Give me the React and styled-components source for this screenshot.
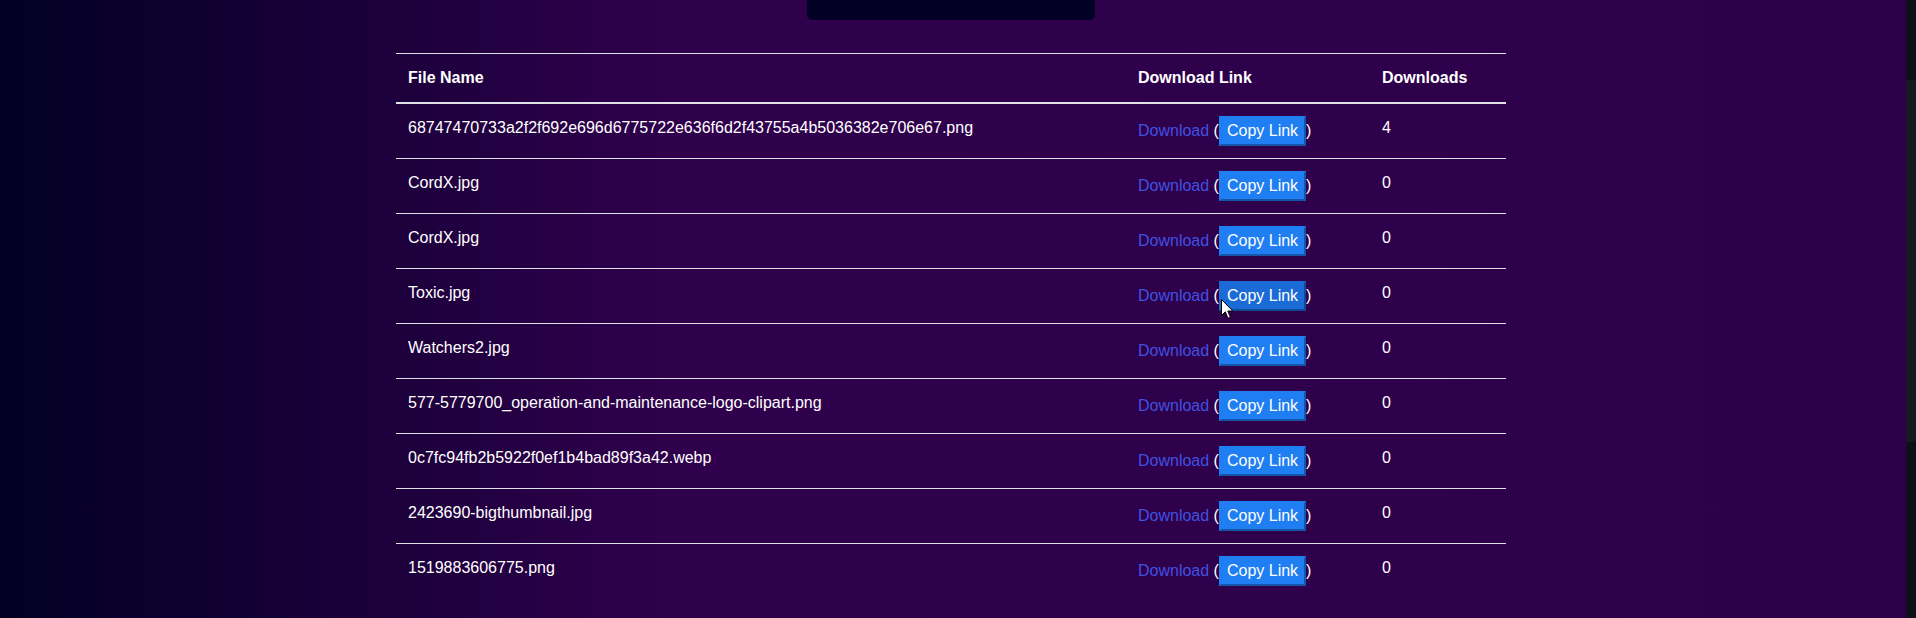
import React from "react";
import styled, { createGlobalStyle } from "styled-components";

const files = [
  { name: "68747470733a2f2f692e696d6775722e636f6d2f43755a4b5036382e706e67.png", count: 4 },
  { name: "CordX.jpg", count: 0 },
  { name: "CordX.jpg", count: 0 },
  { name: "Toxic.jpg", count: 0, hover: true },
  { name: "Watchers2.jpg", count: 0 },
  { name: "577-5779700_operation-and-maintenance-logo-clipart.png", count: 0 },
  { name: "0c7fc94fb2b5922f0ef1b4bad89f3a42.webp", count: 0 },
  { name: "2423690-bigthumbnail.jpg", count: 0 },
  { name: "1519883606775.png", count: 0 },
];

function App() {
  return (
    <>
      <GlobalStyle />
      <Page>
        <Main>
          <TopBox />
          <Container>
            <Table>
              <thead>
                <tr>
                  <Th $w={730}>File Name</Th>
                  <Th $w={244}>Download Link</Th>
                  <Th $w={136}>Downloads</Th>
                </tr>
              </thead>
              <tbody>
                {files.map((f, i) => (
                  <tr key={i}>
                    <Td>{f.name}</Td>
                    <Td>
                      <DownloadLink href="#">Download</DownloadLink> (
                      <CopyButton $hover={f.hover}>Copy Link</CopyButton>)
                    </Td>
                    <Td>{f.count}</Td>
                  </tr>
                ))}
              </tbody>
            </Table>
          </Container>
          <Cursor width="13" height="21" viewBox="0 0 13 21">
            <path
              d="M0.5 0.5 L0.5 16.5 L4.3 12.8 L7 19.3 L9.4 18.3 L6.8 12 L11.8 12 Z"
              fill="#fff"
              stroke="#000"
              strokeWidth="1"
              strokeLinejoin="miter"
            />
          </Cursor>
        </Main>
        <ScrollTrack>
          <ScrollThumb />
        </ScrollTrack>
      </Page>
    </>
  );
}

export default App;

const GlobalStyle = createGlobalStyle`
  html, body {
    margin: 0;
    padding: 0;
    overflow: hidden;
  }
  body {
    font-family: "Liberation Sans", Arial, sans-serif;
    font-size: 16px;
    line-height: 24px;
  }
`;

const Page = styled.div`
  display: flex;
  height: 618px;
  overflow: hidden;
`;

const Main = styled.div`
  position: relative;
  flex: 1;
  padding-right: 4px;
  background: linear-gradient(90deg, #020024 0%, #2f004c 35%, #2e004b 100%);
  color: #fff;
`;

const TopBox = styled.div`
  width: 288px;
  height: 20px;
  margin: 0 auto;
  background-color: #020024;
  border-radius: 0 0 5px 5px;
`;

const Container = styled.div`
  width: 1110px;
  margin: 33px auto 0;
`;

const Table = styled.table`
  width: 100%;
  table-layout: fixed;
  border-collapse: collapse;
  color: #fff;
`;

const Th = styled.th`
  box-sizing: border-box;
  width: ${(p) => p.$w}px;
  padding: 12px;
  text-align: left;
  vertical-align: bottom;
  font-weight: bold;
  border-top: 1px solid #dee2e6;
  border-bottom: 2px solid #dee2e6;
`;

const Td = styled.td`
  padding: 12px;
  vertical-align: top;
  border-top: 1px solid #dee2e6;
`;

const DownloadLink = styled.a`
  color: #3f52e0;
  text-decoration: none;
`;

const CopyButton = styled.button`
  font-family: "Liberation Sans", Arial, sans-serif;
  font-size: 16px;
  line-height: 18px;
  padding: 4px 6px;
  color: #fff;
  cursor: pointer;
  background-color: ${(p) => (p.$hover ? "#1b6bd6" : "#1f7ef2")};
  border-width: 2px;
  border-style: solid;
  border-color: ${(p) =>
    p.$hover
      ? "#1b6bd6 #0f4a96 #0f4a96 #1b6bd6"
      : "#1f7ef2 #1656a8 #1656a8 #1f7ef2"};
`;

const Cursor = styled.svg`
  position: absolute;
  left: 1221px;
  top: 299px;
`;

const ScrollTrack = styled.div`
  width: 10px;
  background-color: #0d1117;
`;

const ScrollThumb = styled.div`
  margin-top: 80px;
  height: 362px;
  background-color: #161b22;
`;
